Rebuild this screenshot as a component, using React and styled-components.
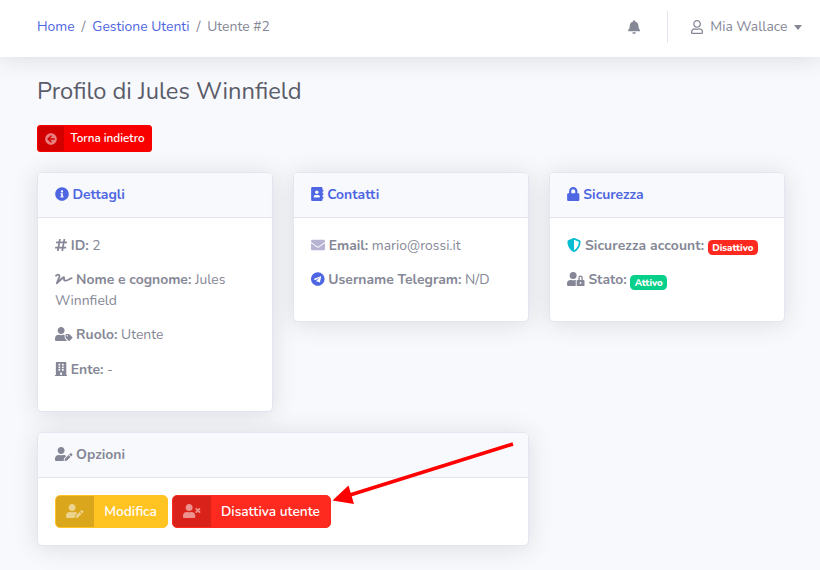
import React from 'react';
import styled, { createGlobalStyle } from 'styled-components';
import {
  FaAddressBook, FaArrowCircleLeft, FaBell, FaBuilding, FaEnvelope, FaHashtag,
  FaInfoCircle, FaLock, FaRegUser, FaShieldAlt, FaSignature, FaTelegram,
  FaUserEdit, FaUserLock, FaUserTag, FaUserTimes,
} from 'react-icons/fa';

const GlobalStyle = createGlobalStyle`
  *, *::before, *::after { box-sizing: border-box; }
  body {
    margin: 0;
    background: #f8f9fc;
    color: #858796;
    font-family: Nunito, Lato, "Open Sans", sans-serif;
    font-size: 13.9px;
    line-height: 20.6px;
    overflow: hidden;
  }
`;

const Page = styled.div`
  height: 570px;
  overflow: hidden;
`;

const Topbar = styled.header`
  display: flex;
  align-items: center;
  height: 57px;
  padding: 0 18px 3px 37px;
  background: #fff;
  box-shadow: 0 2px 24px rgba(58, 59, 69, 0.15);
`;

const Breadcrumb = styled.nav`
  display: flex;
  flex: 1;
  gap: 6.9px;
`;

const Crumb = styled.a`
  color: #4e66e2;
  text-decoration: none;
`;

const Divider = styled.div`
  width: 1px;
  height: 32px;
  margin: 0 23px 0 27px;
  background: #e3e6f0;
`;

const UserMenu = styled.div`
  display: flex;
  align-items: center;
`;

const UserName = styled.span`
  margin: 0 6.5px 0 7px;
`;

const Caret = styled.span`
  margin-top: 1px;
  border: 4.3px solid transparent;
  border-top: 5px solid currentColor;
  border-bottom: 0;
`;

const Icon = styled.span`
  display: inline-flex;
  vertical-align: -2px;
  color: ${(p) => p.$color || 'inherit'};
  svg {
    width: ${(p) => p.$w || 14}px;
    height: ${(p) => p.$h || 14}px;
  }
`;

const Content = styled.main`
  padding: 20px 35px 0 37px;
`;

const Title = styled.h1`
  margin: 0 0 20px;
  font-size: 23.7px;
  font-weight: 400;
  line-height: 28px;
  color: #5a5c69;
`;

const Button = styled.button`
  display: inline-flex;
  align-items: stretch;
  height: ${(p) => (p.$small ? 27 : 33)}px;
  padding: 0;
  border: 1px solid ${(p) => p.$color};
  border-radius: ${(p) => (p.$small ? 3 : 5)}px;
  overflow: hidden;
  background: ${(p) => p.$color};
  color: #fff;
  font-family: inherit;
  font-size: ${(p) => (p.$small ? 11.7 : 13.7)}px;
  font-weight: 600;
  line-height: ${(p) => (p.$small ? 25 : 31)}px;
`;

const ButtonIcon = styled.span`
  display: flex;
  align-items: center;
  justify-content: center;
  width: ${(p) => (p.$small ? 26 : 38)}px;
  padding-bottom: ${(p) => (p.$small ? 0 : 1)}px;
  background: rgba(0, 0, 0, 0.15);
  color: rgba(255, 255, 255, 0.5);
`;

const ButtonLabel = styled.span`
  width: ${(p) => p.$w}px;
  text-align: center;
  white-space: nowrap;
`;

const Cards = styled.div`
  display: grid;
  grid-template-columns: repeat(3, 1fr);
  align-items: start;
  gap: 20px 20.5px;
  margin-top: 20px;
`;

const Card = styled.section`
  grid-column: span ${(p) => p.$span || 1};
  height: ${(p) => p.$h}px;
  border: 1px solid #e3e6f0;
  border-radius: 5px;
  background: #fff;
  box-shadow: 0 2px 24px rgba(58, 59, 69, 0.15);
`;

const CardHeader = styled.h2`
  display: flex;
  align-items: center;
  gap: 3.5px;
  height: 45px;
  margin: 0;
  padding: 0 17px;
  border-bottom: 1px solid #e3e6f0;
  border-radius: 4px 4px 0 0;
  background: #f8f9fc;
  color: ${(p) => (p.$muted ? '#858796' : '#4e66e2')};
  font-size: inherit;
  font-weight: 700;
  ${Icon} { margin-bottom: 2px; }
`;

const CardBody = styled.div`
  padding: 17.7px 17px;
`;

const Field = styled.p`
  margin: 0 0 13.6px;
  line-height: 20.8px;
`;

const Label = styled.strong`
  font-weight: 700;
  letter-spacing: ${(p) => p.$track || 0}px;
`;

const Badge = styled.span`
  display: inline-block;
  height: 15px;
  margin: -4px 0 -6px;
  padding: 0 4.3px;
  border-radius: 4.5px;
  vertical-align: -1.5px;
  background: ${(p) => p.$color};
  color: #fff;
  font-size: 9.7px;
  font-weight: 800;
  line-height: 15px;
`;

const Actions = styled.div`
  display: flex;
  gap: 4px;
  padding: 17px;
`;

const Pointer = styled.svg`
  position: absolute;
  left: 325px;
  top: 435px;
  width: 195px;
  height: 75px;
  pointer-events: none;
`;

const Row = ({ icon, w, h, color, label, track, children }) => (
  <Field>
    <Icon $w={w} $h={h} $color={color}>{icon}</Icon> <Label $track={track}>{label}</Label> {children}
  </Field>
);

export default function App() {
  return (
    <Page>
      <GlobalStyle />
      <Topbar>
        <Breadcrumb>
          <Crumb href="#">Home</Crumb><span>/</span>
          <Crumb href="#">Gestione Utenti</Crumb><span>/</span>
          <span>Utente #2</span>
        </Breadcrumb>
        <Icon $w={12.2}><FaBell /></Icon>
        <Divider />
        <UserMenu>
          <Icon $w={12.2}><FaRegUser /></Icon>
          <UserName>Mia Wallace</UserName>
          <Caret />
        </UserMenu>
      </Topbar>
      <Content>
        <Title>Profilo di Jules Winnfield</Title>
        <Button $small $color="#f80000">
          <ButtonIcon $small><Icon $w={12} $h={12}><FaArrowCircleLeft /></Icon></ButtonIcon>
          <ButtonLabel $w={87}>Torna indietro</ButtonLabel>
        </Button>
        <Cards>
          <Card $h={240}>
            <CardHeader><Icon><FaInfoCircle /></Icon>Dettagli</CardHeader>
            <CardBody>
              <Row icon={<FaHashtag />} w={12.2} label="ID:">2</Row>
              <Row icon={<FaSignature />} w={17.5} label="Nome e cognome:">Jules Winnfield</Row>
              <Row icon={<FaUserTag />} w={17.5} label="Ruolo:">Utente</Row>
              <Row icon={<FaBuilding />} w={12.2} label="Ente:">-</Row>
            </CardBody>
          </Card>
          <Card $h={150}>
            <CardHeader><Icon $w={12.5}><FaAddressBook /></Icon>Contatti</CardHeader>
            <CardBody>
              <Row icon={<FaEnvelope />} color="#b7b3d2" label="Email:">mario@rossi.it</Row>
              <Row icon={<FaTelegram />} w={13.6} color="#4e66e2" label="Username Telegram:">N/D</Row>
            </CardBody>
          </Card>
          <Card $h={150}>
            <CardHeader><Icon $w={12.5}><FaLock /></Icon>Sicurezza</CardHeader>
            <CardBody>
              <Row icon={<FaShieldAlt />} color="#05bdd2" label="Sicurezza account:" track={0.1}>
                <Badge $color="#ff2a1f">Disattivo</Badge>
              </Row>
              <Row icon={<FaUserLock />} w={17.5} label="Stato:">
                <Badge $color="#07d08b">Attivo</Badge>
              </Row>
            </CardBody>
          </Card>
          <Card $span={2} $h={114}>
            <CardHeader $muted><Icon $w={17.5}><FaUserEdit /></Icon>Opzioni</CardHeader>
            <Actions>
              <Button $color="#ffc322">
                <ButtonIcon><Icon $w={17.5}><FaUserEdit /></Icon></ButtonIcon>
                <ButtonLabel $w={73}>Modifica</ButtonLabel>
              </Button>
              <Button $color="#ff2a1f">
                <ButtonIcon><Icon $w={17.5}><FaUserTimes /></Icon></ButtonIcon>
                <ButtonLabel $w={119}>Disattiva utente</ButtonLabel>
              </Button>
            </Actions>
          </Card>
        </Cards>
      </Content>
      <Pointer viewBox="325 435 195 75">
        <path d="M513 444 L350 495" stroke="#f00" strokeWidth="3.6" />
        <path d="M332.5 500.5 L348.5 485.5 L354 504 Z" fill="#f00" />
      </Pointer>
    </Page>
  );
}
